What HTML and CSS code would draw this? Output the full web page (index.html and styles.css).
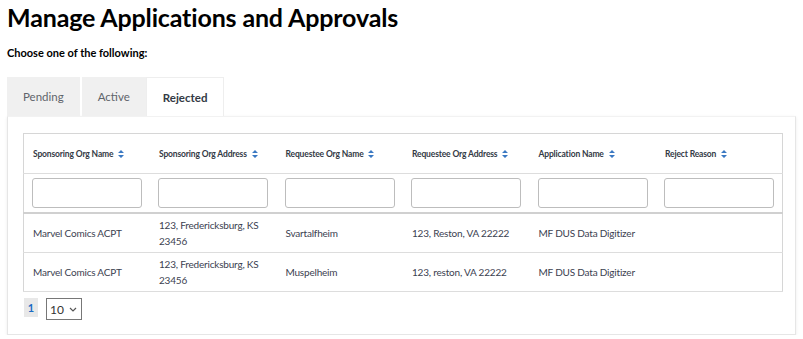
FILE: index.html
```html
<!DOCTYPE html>
<html>
<head>
    <meta charset="utf-8">
    <title>Manage Applications and Approvals</title>
    <link rel="stylesheet" href="styles.css">
</head>
<body>
    <h1 class="page-title">Manage Applications and Approvals</h1>
    <p class="intro">Choose one of the following:</p>

    <div class="tabs">
        <div class="tab">Pending</div>
        <div class="tab">Active</div>
        <div class="tab tab-active">Rejected</div>
    </div>

    <div class="panel">
        <table class="grid">
            <thead>
                <tr class="head-row">
                    <th>Sponsoring Org Name <span class="sort"><svg width="6" height="8" viewBox="0 0 6 8"><path d="M3 0L6 3H0z M3 8L0 5h6z" fill="#3a78c2"/></svg></span></th>
                    <th>Sponsoring Org Address <span class="sort"><svg width="6" height="8" viewBox="0 0 6 8"><path d="M3 0L6 3H0z M3 8L0 5h6z" fill="#3a78c2"/></svg></span></th>
                    <th>Requestee Org Name <span class="sort"><svg width="6" height="8" viewBox="0 0 6 8"><path d="M3 0L6 3H0z M3 8L0 5h6z" fill="#3a78c2"/></svg></span></th>
                    <th>Requestee Org Address <span class="sort"><svg width="6" height="8" viewBox="0 0 6 8"><path d="M3 0L6 3H0z M3 8L0 5h6z" fill="#3a78c2"/></svg></span></th>
                    <th>Application Name <span class="sort"><svg width="6" height="8" viewBox="0 0 6 8"><path d="M3 0L6 3H0z M3 8L0 5h6z" fill="#3a78c2"/></svg></span></th>
                    <th>Reject Reason <span class="sort"><svg width="6" height="8" viewBox="0 0 6 8"><path d="M3 0L6 3H0z M3 8L0 5h6z" fill="#3a78c2"/></svg></span></th>
                </tr>
                <tr class="filter-row">
                    <th><input type="text" class="filter"></th>
                    <th><input type="text" class="filter"></th>
                    <th><input type="text" class="filter"></th>
                    <th><input type="text" class="filter"></th>
                    <th><input type="text" class="filter"></th>
                    <th><input type="text" class="filter"></th>
                </tr>
            </thead>
            <tbody>
                <tr>
                    <td>Marvel Comics ACPT</td>
                    <td>123, Fredericksburg, KS 23456</td>
                    <td>Svartalfheim</td>
                    <td>123, Reston, VA 22222</td>
                    <td>MF DUS Data Digitizer</td>
                    <td></td>
                </tr>
                <tr>
                    <td>Marvel Comics ACPT</td>
                    <td>123, Fredericksburg, KS 23456</td>
                    <td>Muspelheim</td>
                    <td>123, reston, VA 22222</td>
                    <td>MF DUS Data Digitizer</td>
                    <td></td>
                </tr>
            </tbody>
        </table>

        <div class="pager">
            <span class="page-num">1</span>
            <div class="page-size">
                <span>10</span>
                <svg width="8" height="5" viewBox="0 0 8 5"><path d="M1 1l3 3 3-3" fill="none" stroke="#555" stroke-width="1.2"/></svg>
            </div>
        </div>
    </div>
</body>
</html>
```

FILE: styles.css
```css
/* General */
body {
    margin: 0;
    padding: 0 7px;
    background-color: #ffffff;
    font-family: 'Source Sans Pro', Lato, 'Liberation Sans', sans-serif;
    color: #333a45;
}
.page-title {
    margin: 0;
    padding-top: 2px;
    font-size: 25px;
    font-weight: bold;
    line-height: 30px;
    letter-spacing: -0.15px;
    color: #000000;
}
.intro {
    margin: 13px 0 0;
    font-size: 11px;
    font-weight: bold;
    line-height: 15px;
    color: #000000;
}
/* Tabs */
.tabs {
    display: flex;
    margin-top: 17px;
    height: 39px;
}
.tab {
    display: flex;
    align-items: center;
    justify-content: center;
    background-color: #f0f0f0;
    color: #5f646b;
    font-size: 11.5px;
    padding: 0 16px;
    margin-right: 2px;
}
.tab-active {
    background-color: #ffffff;
    color: #333a45;
    font-weight: bold;
    border: 1px solid #eeeeee;
    border-bottom: none;
    margin-right: 0;
    margin-left: -2px;
}
/* Panel */
.panel {
    border: 1px solid #e6e6e6;
    border-top: 1px solid #f2f2f2;
    box-shadow: 0 1px 3px rgba(0, 0, 0, 0.08);
    padding: 16px 16px 15px 15px;
    height: 186px;
}
/* Table */
.grid {
    width: 760px;
    border-collapse: collapse;
    table-layout: fixed;
    border: 1px solid #d6d6d6;
}
.grid th, .grid td {
    text-align: left;
    padding: 0 0 0 9px;
}
.head-row th {
    height: 39px;
    font-size: 8.5px;
    font-weight: bold;
    letter-spacing: -0.15px;
    color: #333a45;
    border-bottom: 1px solid #dddddd;
}
.sort svg {
    margin-left: 3px;
    vertical-align: -1px;
}
.filter-row th {
    height: 38px;
    padding-left: 8px;
    border-bottom: 2px solid #d0d0d0;
}
.filter {
    display: block;
    width: 110px;
    height: 30px;
    box-sizing: border-box;
    border: 1px solid #bdbdbd;
    border-radius: 3px;
    margin: 0;
}
.grid td {
    height: 38px;
    font-size: 10px;
    line-height: 16px;
    letter-spacing: -0.2px;
    color: #3b4150;
    border-bottom: 1px solid #dddddd;
}
/* Pager */
.pager {
    display: flex;
    align-items: flex-start;
    gap: 8px;
    margin-top: 6px;
    padding-left: 1px;
}
.page-num {
    width: 14px;
    height: 19px;
    line-height: 19px;
    text-align: center;
    background-color: #e8e8e8;
    color: #1a6bc4;
    font-weight: bold;
    font-size: 11px;
}
.page-size {
    display: flex;
    align-items: center;
    justify-content: space-between;
    width: 36px;
    height: 22px;
    box-sizing: border-box;
    border: 1px solid #777777;
    padding: 0 4px 0 3px;
    font-size: 12px;
    color: #333333;
}
```
